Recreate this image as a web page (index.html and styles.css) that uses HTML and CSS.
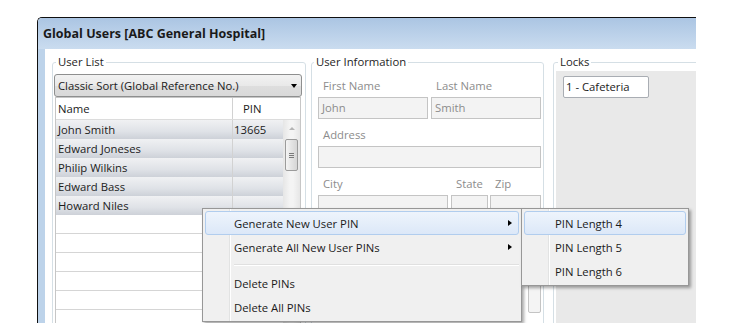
FILE: index.html
```html
<!DOCTYPE html>
<html>
<head>
<meta charset="utf-8">
<title>Global Users</title>
<link rel="stylesheet" href="styles.css">
</head>
<body>
<div class="window">
  <div class="titlebar">Global Users [ABC General Hospital]</div>
  <div class="client">
    <fieldset class="group g-users">
      <legend>User List</legend>
      <div class="users-body">
        <div class="combo"><span class="combo-text">Classic Sort (Global Reference No.)</span><span class="caret"></span></div>
        <div class="grid">
          <div class="ghead">
            <div class="c-name">Name</div>
            <div class="c-pin">PIN</div>
            <div class="c-fill"></div>
          </div>
          <div class="gbody">
            <div class="rows">
              <div class="row filled"><div class="c-name">John Smith</div><div class="c-pin">13665</div></div>
              <div class="row filled"><div class="c-name">Edward Joneses</div><div class="c-pin"></div></div>
              <div class="row filled"><div class="c-name">Philip Wilkins</div><div class="c-pin"></div></div>
              <div class="row filled"><div class="c-name">Edward Bass</div><div class="c-pin"></div></div>
              <div class="row filled"><div class="c-name">Howard Niles</div><div class="c-pin"></div></div>
              <div class="row empty"></div>
              <div class="row empty"></div>
              <div class="row empty"></div>
              <div class="row empty"></div>
              <div class="row empty"></div>
              <div class="row empty"></div>
            </div>
            <div class="vscroll">
              <div class="sb-btn"><span class="sb-up"></span></div>
              <div class="thumb"><span class="grip"></span></div>
            </div>
          </div>
        </div>
      </div>
    </fieldset>

    <fieldset class="group g-info">
      <legend>User Information</legend>
      <div class="info-body">
        <div class="frow">
          <div class="field w-half"><div class="lbl">First Name</div><div class="tb">John</div></div>
          <div class="field w-half"><div class="lbl">Last Name</div><div class="tb">Smith</div></div>
        </div>
        <div class="frow">
          <div class="field w-full"><div class="lbl">Address</div><div class="tb"></div></div>
        </div>
        <div class="frow">
          <div class="field w-city"><div class="lbl">City</div><div class="tb"></div></div>
          <div class="field w-state"><div class="lbl">State</div><div class="tb"></div></div>
          <div class="field w-zip"><div class="lbl">Zip</div><div class="tb"></div></div>
        </div>
        <div class="frow frow-end">
          <div class="btn"></div>
        </div>
      </div>
    </fieldset>

    <fieldset class="group g-locks">
      <legend>Locks</legend>
      <div class="locks-body">
        <div class="lockpane">
          <div class="lockitem">1 - Cafeteria</div>
        </div>
      </div>
    </fieldset>
  </div>

  <div class="menu main-menu">
    <div class="mi hl"><span>Generate New User PIN</span><span class="arr"></span></div>
    <div class="mi"><span>Generate All New User PINs</span><span class="arr"></span></div>
    <div class="sep"></div>
    <div class="mi"><span>Delete PINs</span></div>
    <div class="mi"><span>Delete All PINs</span></div>
  </div>

  <div class="menu sub-menu">
    <div class="mi hl"><span>PIN Length 4</span></div>
    <div class="mi"><span>PIN Length 5</span></div>
    <div class="mi"><span>PIN Length 6</span></div>
  </div>
</div>
</body>
</html>
```

FILE: styles.css
```css
* { box-sizing: border-box; }

html, body {
  margin: 0;
  padding: 0;
  background: #ffffff;
}

body {
  font-family: "Open Sans", "Noto Sans", sans-serif;
  font-size: 11.3px;
  color: #1b1b1b;
  width: 730px;
  height: 333px;
  overflow: hidden;
}

.window {
  position: relative;
  margin: 17px 0 0 37px;
  width: 659px;
  height: 306px;
  border-top: 1px solid #101010;
  border-left: 1px solid #101010;
  border-top-left-radius: 5px;
  overflow: hidden;
  background: #ffffff;
}

.titlebar {
  height: 31px;
  padding-left: 5px;
  display: flex;
  align-items: center;
  font-weight: 700;
  font-size: 12.5px;
  color: #1a1a1a;
  background: linear-gradient(#abc5e3, #cadcef);
}

.client {
  display: flex;
  align-items: flex-start;
  height: 274px;
  border-left: 7px solid #bdd3ea;
  padding: 5px 0 0 7px;
}

fieldset.group {
  margin: 0;
  padding: 0;
  border: 1px solid #d5dfe5;
  border-radius: 3px;
  min-width: 0;
  height: 300px;
  flex: none;
}

.group legend {
  padding: 0 2px;
  line-height: 16px;
  color: #1e1e1e;
}

fieldset.g-users { width: 254px; }
.g-users legend { margin-left: 3px; }

fieldset.g-info { width: 233px; margin-left: 5px; }
.g-info legend { margin-left: 2px; }

fieldset.g-locks { width: 170px; margin-left: 9px; }
.g-locks legend { margin-left: 4px; }

/* ---------- user list ---------- */
.users-body {
  padding: 4px 3px 0 1px;
}

.combo {
  height: 23px;
  border: 1px solid #8e8f8f;
  border-radius: 3px;
  background: linear-gradient(#f2f2f2, #e9e9e9 50%, #dedede 51%, #d9d9d9);
  display: flex;
  align-items: center;
  padding: 0 4px 0 3px;
}

.combo-text { flex: 1; }

.caret {
  width: 0;
  height: 0;
  border-top: 4px solid #000;
  border-left: 3.5px solid transparent;
  border-right: 3.5px solid transparent;
}

.grid {
  margin: 0 1px;
  border: 1px solid #c6c6c6;
  border-bottom: none;
}

.ghead {
  display: flex;
  height: 22px;
  border-bottom: 1px solid #dcdcdc;
}

.ghead .c-name,
.ghead .c-pin {
  display: flex;
  align-items: center;
}

.c-name {
  width: 176px;
  padding-left: 2px;
  white-space: nowrap;
}

.c-pin {
  width: 51px;
  border-left: 1px solid #d2d2d2;
  padding-left: 10px;
}

.c-fill { width: 17px; }

.gbody { display: flex; }

.rows { width: 227px; }

.row {
  display: flex;
  height: 19px;
}

.row.filled {
  background: linear-gradient(#f0f1f3, #dfe2e7 60%, #cdd1d8);
}

.row.filled .c-name,
.row.filled .c-pin {
  display: flex;
  align-items: center;
}

.row.filled .c-pin { padding-left: 1px; }

.row.empty {
  border-bottom: 1px solid #d5d5d5;
  background: #ffffff;
}

.vscroll {
  width: 17px;
  height: 230px;
  background: linear-gradient(90deg, #e6e6e6, #f4f4f4 40%, #f4f4f4 60%, #e6e6e6);
  display: flex;
  flex-direction: column;
  align-items: center;
}

.sb-btn {
  width: 17px;
  height: 17px;
  display: flex;
  align-items: center;
  justify-content: center;
}

.sb-up {
  width: 0;
  height: 0;
  border-bottom: 3px solid #b4b4b4;
  border-left: 3px solid transparent;
  border-right: 3px solid transparent;
}

.thumb {
  margin-top: 2px;
  width: 13px;
  height: 32px;
  border: 1px solid #9b9b9b;
  border-radius: 2px;
  background: linear-gradient(90deg, #f4f4f4, #e4e4e4 50%, #d6d6d6);
  display: flex;
  align-items: center;
  justify-content: center;
}

.grip {
  width: 5px;
  height: 5px;
  border-top: 1px solid #7a7a7a;
  border-bottom: 1px solid #7a7a7a;
  background: linear-gradient(#7a7a7a, #7a7a7a) center / 5px 1px no-repeat;
}

/* ---------- user information ---------- */
.info-body {
  padding: 5px 2px 0 6px;
  display: flex;
  flex-direction: column;
  gap: 5px;
}

.frow {
  display: flex;
  gap: 3px;
}

.frow-end {
  justify-content: flex-end;
  margin-top: 61px;
}

.field {
  display: flex;
  flex-direction: column;
}

.w-half { width: 110px; }
.w-full { width: 223px; }
.w-city { width: 130px; }
.w-state { width: 37px; }
.w-zip { width: 51px; margin-left: -1px; }

.lbl {
  height: 22px;
  line-height: 22px;
  padding-left: 5px;
  color: #8c8c8c;
  white-space: nowrap;
}

.tb {
  height: 22px;
  border: 1px solid #c4c4c4;
  background: #f3f3f3;
  color: #8c8c8c;
  padding-left: 3px;
  line-height: 20px;
}

.btn {
  width: 13px;
  height: 30px;
  border: 1px solid #c4c4c4;
  border-radius: 2px;
  background: #f4f4f4;
}

/* ---------- locks ---------- */
.locks-body {
  padding: 1px 0 0 2px;
}

.lockpane {
  height: 260px;
  background: #e9e9e9;
  padding: 5px 0 0 7px;
}

.lockitem {
  width: 86px;
  height: 22px;
  border: 1px solid #a9adb3;
  border-radius: 2px;
  background: #ffffff;
  padding-left: 2px;
  line-height: 20px;
  color: #1b1b1b;
}

/* ---------- context menus ---------- */
.menu {
  position: absolute;
  top: 190px;
  padding: 2px;
  border: 1px solid #979797;
  background:
    linear-gradient(90deg, transparent 26px, #e2e3e3 26px, #e2e3e3 27px, #ffffff 27px, #ffffff 28px, transparent 28px),
    #f0f0f0;
  box-shadow: 2px 2px 3px rgba(0, 0, 0, 0.35);
  color: #1b1b1b;
}

.main-menu { left: 164px; width: 320px; }
.sub-menu { left: 483px; width: 168px; }

.mi {
  height: 24px;
  border: 1px solid transparent;
  border-radius: 3px;
  display: flex;
  align-items: center;
  padding-left: 28px;
  padding-right: 6px;
  white-space: nowrap;
}

.sub-menu .mi { padding-left: 30px; }

.mi.hl {
  background: linear-gradient(#eef4fc, #dce8f8);
  border-color: #b1cdee;
}

.arr {
  margin-left: auto;
  width: 0;
  height: 0;
  border-left: 4px solid #000;
  border-top: 3.5px solid transparent;
  border-bottom: 3.5px solid transparent;
}

.sep {
  margin: 5px 0 6px 29px;
  height: 1px;
  background: #e0e0e0;
  box-shadow: 0 1px 0 #ffffff;
}
```
